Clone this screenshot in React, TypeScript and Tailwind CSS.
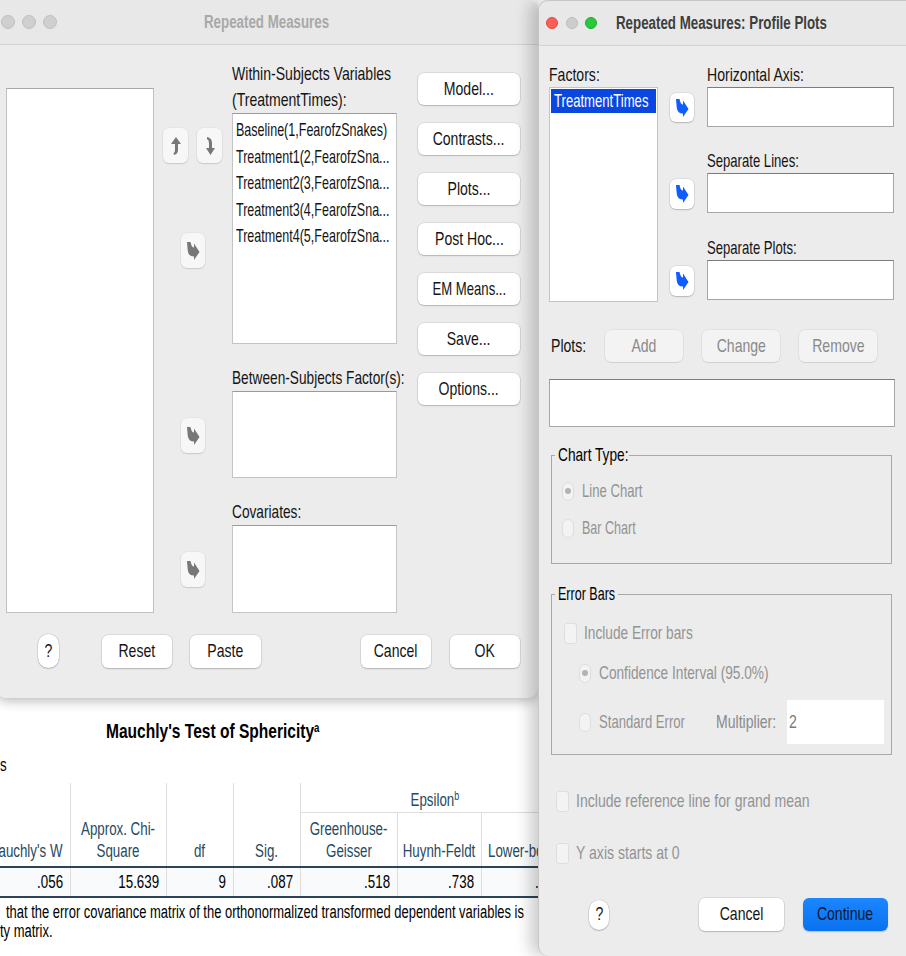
import React from "react";

const F = "font-['Liberation_Sans',Arial,sans-serif]";

function T({ children, o = "c", s = 74 }: { children: React.ReactNode; o?: "l" | "c" | "r"; s?: 74 | 72 | 69 | 66 }) {
  const origin = o === "l" ? "origin-left" : o === "r" ? "origin-right" : "origin-center";
  const sc = s === 72 ? "scale-x-[0.72]" : s === 69 ? "scale-x-[0.69]" : s === 66 ? "scale-x-[0.66]" : "scale-x-[0.74]";
  return <span className={`inline-block whitespace-nowrap ${sc} ${origin}`}>{children}</span>;
}

function RightArrow({ color = "#777777" }: { color?: string }) {
  return (
    <svg width="14" height="20" viewBox="0 0 14 20">
      <path d="M1 1 L4.5 1 Q5.5 6.5 8 6.5 L8 2.5 L13.5 11 L8 19 L8 15.5 Q2.5 15.5 1.8 10 Q1.4 6 1 1 Z" fill={color} />
    </svg>
  );
}

function UpArrow() {
  return (
    <svg width="12" height="20" viewBox="0 0 12 20">
      <path d="M6 1 L11 8 L8 8 L8 14 Q8 18 4 19 L3.5 17.5 Q5 16.5 5 14 L5 8 L1 8 Z" fill="#777777" />
    </svg>
  );
}

function DownArrow() {
  return (
    <svg width="12" height="20" viewBox="0 0 12 20">
      <path d="M3 1 Q8 2 8 7 L8 12 L11 12 L6.5 19 L2 12 L5 12 L5 7 Q5 4 3 3 Z" fill="#777777" />
    </svg>
  );
}

const btn =
  "bg-white rounded-[6px] shadow-[0_1px_1.5px_rgba(0,0,0,0.18),0_0_0_0.5px_rgba(0,0,0,0.14)] flex items-center justify-center text-[19px] text-[#141414]";
const disBtn =
  "bg-[#f3f3f3] rounded-[6px] shadow-[0_1px_1px_rgba(0,0,0,0.08),0_0_0_0.5px_rgba(0,0,0,0.08)] flex items-center justify-center text-[19px] text-[#8a8a8a]";
const arrowBtn =
  "bg-[#f7f7f7] rounded-[6px] shadow-[0_1px_1.5px_rgba(0,0,0,0.12),0_0_0_0.5px_rgba(0,0,0,0.06)] flex items-center justify-center";
const blueArrowBtn =
  "bg-white rounded-[6px] shadow-[0_1px_1.5px_rgba(0,0,0,0.18),0_0_0_0.5px_rgba(0,0,0,0.12)] flex items-center justify-center";
const box = "bg-white border border-[#c4c4c4] border-t-[#9a9a9a]";
const radio = "w-[12px] h-[19px] rounded-full bg-[#f3f3f3] border border-[#dedede] flex items-center justify-center shrink-0";
const check = "w-[13px] h-[21px] rounded-[3px] bg-[#f3f3f3] border border-[#dedede] shrink-0";

function LeftDialog() {
  return (
    <div className="-ml-[4px] w-[542px] h-[698px] shrink-0 bg-[#ececec] rounded-b-[10px] rounded-tr-[10px] shadow-[0_3px_12px_rgba(0,0,0,0.28)] relative z-[1] flex flex-col">
      <div className="h-[45px] shrink-0 grid grid-cols-[1fr_auto_1fr] items-center border-b border-[#d2d2d2] bg-[#e8e8e8] rounded-tr-[10px]">
        <div className="flex gap-[7px] pl-[5px]">
          <div className="w-[14px] h-[14px] rounded-full bg-[#cfcfcf] border border-[#c0c0c0]" />
          <div className="w-[14px] h-[14px] rounded-full bg-[#cfcfcf] border border-[#c0c0c0]" />
          <div className="w-[14px] h-[14px] rounded-full bg-[#cfcfcf] border border-[#c0c0c0]" />
        </div>
        <div className="text-[18px] font-bold text-[#a8a8a8]"><T>Repeated Measures</T></div>
        <div />
      </div>
      <div className="flex h-[568px] pl-[10px] text-[19px] text-[#141414]">
        <div className="pt-[43px] w-[148px] shrink-0">
          <div className="h-[525px] bg-white border border-[#c0c0c0] border-t-[#a8a8a8]" />
        </div>
        <div className="ml-[9px] w-[59px] shrink-0 flex flex-col items-center pt-[83px]">
          <div className="flex gap-[9px]">
            <div className={`${arrowBtn} w-[25px] h-[35px]`}><UpArrow /></div>
            <div className={`${arrowBtn} w-[25px] h-[35px]`}><DownArrow /></div>
          </div>
          <div className={`${arrowBtn} w-[24px] h-[35px] mt-[70px]`}><RightArrow /></div>
          <div className={`${arrowBtn} w-[24px] h-[35px] mt-[150px]`}><RightArrow /></div>
          <div className={`${arrowBtn} w-[24px] h-[35px] mt-[99px]`}><RightArrow /></div>
        </div>
        <div className="ml-[10px] w-[165px] shrink-0 pt-[16px] flex flex-col">
          <div className="leading-[26px]"><T o="l">Within-Subjects Variables</T></div>
          <div className="leading-[26px]"><T o="l">(TreatmentTimes):</T></div>
          <div className={`${box} h-[232px] pt-[3px] pl-[3px] leading-[26.5px] overflow-hidden`}>
            <div><T o="l" s={66}>Baseline(1,FearofzSnakes)</T></div>
            <div><T o="l" s={66}>Treatment1(2,FearofzSna...</T></div>
            <div><T o="l" s={66}>Treatment2(3,FearofzSna...</T></div>
            <div><T o="l" s={66}>Treatment3(4,FearofzSna...</T></div>
            <div><T o="l" s={66}>Treatment4(5,FearofzSna...</T></div>
          </div>
          <div className="leading-[26px] mt-[21px]"><T o="l" s={72}>Between-Subjects Factor(s):</T></div>
          <div className={`${box} h-[87px]`} />
          <div className="leading-[26px] mt-[21px]"><T o="l" s={72}>Covariates:</T></div>
          <div className={`${box} h-[88px]`} />
        </div>
        <div className="ml-[21px] w-[102px] shrink-0 pt-[28px] flex flex-col gap-[18px]">
          <div className={`${btn} h-[32px]`}><T>Model...</T></div>
          <div className={`${btn} h-[32px]`}><T>Contrasts...</T></div>
          <div className={`${btn} h-[32px]`}><T>Plots...</T></div>
          <div className={`${btn} h-[32px]`}><T>Post Hoc...</T></div>
          <div className={`${btn} h-[32px]`}><T s={69}>EM Means...</T></div>
          <div className={`${btn} h-[32px]`}><T>Save...</T></div>
          <div className={`${btn} h-[32px]`}><T>Options...</T></div>
        </div>
      </div>
      <div className="flex items-center h-[34px] mt-[21px] pl-[42px]">
        <div className={`${btn} w-[21px] h-[34px] !rounded-full`}><T>?</T></div>
        <div className={`${btn} w-[70px] h-[33px] ml-[43px]`}><T>Reset</T></div>
        <div className={`${btn} w-[71px] h-[33px] ml-[18px]`}><T>Paste</T></div>
        <div className={`${btn} w-[70px] h-[33px] ml-[100px]`}><T>Cancel</T></div>
        <div className={`${btn} w-[70px] h-[33px] ml-[19px]`}><T>OK</T></div>
      </div>
    </div>
  );
}

function Viewer() {
  const hd = "text-[18px] leading-[22px] text-[#264a60]";
  const cols = "grid grid-cols-[92px_96px_67px_67px_97px_84px_87px]";
  return (
    <div className="flex-1 bg-white">
      <div className="mt-[20px] pl-[106px] text-[21px] font-bold leading-[26px] text-black">
        <T o="l">Mauchly's Test of Sphericity<sup className="text-[13px] font-bold">a</sup></T>
      </div>
      <div className="mt-[11px] text-[18px] leading-[20px] text-black"><T o="l">s</T></div>
      <div className="mt-[8px] -ml-[22px] w-[590px]">
        <div className={`${cols} grid-rows-[30px_53px] ${hd} border-b-2 border-[#2b4457]`}>
          <div className="row-span-2 flex items-end justify-end pr-[8px] pb-[4px]"><T o="r">Mauchly's W</T></div>
          <div className="row-span-2 flex flex-col items-center justify-end pb-[4px] border-l border-[#dddddd]">
            <T>Approx. Chi-</T>
            <T>Square</T>
          </div>
          <div className="row-span-2 flex items-end justify-center pb-[4px] border-l border-[#dddddd]"><T>df</T></div>
          <div className="row-span-2 flex items-end justify-center pb-[4px] border-l border-[#dddddd]"><T>Sig.</T></div>
          <div className="col-span-3 flex items-center justify-center pt-[4px] border-l border-b border-[#dddddd]">
            <T>Epsilon<sup className="text-[12px]">b</sup></T>
          </div>
          <div className="flex flex-col items-center justify-end pb-[4px] border-l border-[#dddddd]">
            <T>Greenhouse-</T>
            <T>Geisser</T>
          </div>
          <div className="flex items-end justify-center pb-[4px] border-l border-[#dddddd]"><T>Huynh-Feldt</T></div>
          <div className="flex items-end justify-start pl-[6px] pb-[4px] border-l border-[#dddddd]"><T o="l">Lower-bound</T></div>
        </div>
        <div className={`${cols} h-[30px] text-[18px] text-black bg-[#f9fafb] border-b-2 border-[#2b4457]`}>
          {[".056", "15.639", "9", ".087", ".518", ".738", ".250"].map((v, i) => (
            <div key={i} className={`flex items-center justify-end pr-[7px] ${i > 0 ? "border-l border-[#dddddd]" : ""}`}><T o="r">{v}</T></div>
          ))}
        </div>
      </div>
      <div className="mt-[5px] text-[18px] leading-[19px] text-black">
        <div className="pl-[6px]"><T o="l" s={72}>that the error covariance matrix of the orthonormalized transformed dependent variables is</T></div>
        <div><T o="l" s={72}>ty matrix.</T></div>
      </div>
    </div>
  );
}

function RightDialog() {
  return (
    <div className="w-[368px] shrink-0 h-[956px] bg-[#ececec] rounded-tl-[10px] rounded-bl-[10px] border-l border-t border-[#c6c6c6] relative z-10 shadow-[-8px_0_16px_rgba(0,0,0,0.2)] flex flex-col text-[19px] text-[#141414]">
      <div className="h-[45px] shrink-0 flex items-center border-b border-[#d2d2d2] bg-[#e8e8e8] rounded-tl-[10px] pl-[7px]">
        <div className="w-[12px] h-[12px] rounded-full bg-[#fe5f57] border border-[#e14640]" />
        <div className="w-[12px] h-[12px] rounded-full bg-[#cdcdcd] border border-[#bdbdbd] ml-[8px]" />
        <div className="w-[12px] h-[12px] rounded-full bg-[#28c840] border border-[#1aab29] ml-[7px]" />
        <div className="ml-[19px] text-[18px] font-bold text-[#3e3e3e]"><T o="l">Repeated Measures: Profile Plots</T></div>
      </div>
      <div className="flex pl-[10px]">
        <div className="w-[109px] shrink-0 pt-[17px]">
          <div className="leading-[24px]"><T o="l">Factors:</T></div>
          <div className="h-[215px] bg-white border border-[#9fd0ea] p-[1px] overflow-hidden">
            <div className="h-[24px] bg-[#0a46e0] text-white leading-[24px] pl-[3px]"><T o="l" s={69}>TreatmentTimes</T></div>
          </div>
        </div>
        <div className="ml-[12px] w-[24px] shrink-0 pt-[47px] flex flex-col">
          <div className={`${blueArrowBtn} h-[29px]`}><RightArrow color="#0f5cff" /></div>
          <div className={`${blueArrowBtn} h-[30px] mt-[57px]`}><RightArrow color="#0f5cff" /></div>
          <div className={`${blueArrowBtn} h-[30px] mt-[57px]`}><RightArrow color="#0f5cff" /></div>
        </div>
        <div className="ml-[13px] w-[187px] shrink-0 pt-[17px] flex flex-col">
          <div className="leading-[24px]"><T o="l">Horizontal Axis:</T></div>
          <div className="h-[40px] bg-white border border-[#a6a6a6] border-t-[#7c7c7c]" />
          <div className="leading-[24px] mt-[22px]"><T o="l" s={69}>Separate Lines:</T></div>
          <div className="h-[40px] bg-white border border-[#a6a6a6] border-t-[#7c7c7c]" />
          <div className="leading-[24px] mt-[23px]"><T o="l" s={69}>Separate Plots:</T></div>
          <div className="h-[40px] bg-white border border-[#a6a6a6] border-t-[#7c7c7c]" />
        </div>
      </div>
      <div className="flex items-center h-[32px] mt-[28px] pl-[12px]">
        <div className="w-[54px] shrink-0"><T o="l">Plots:</T></div>
        <div className={`${disBtn} w-[78px] h-[32px]`}><T>Add</T></div>
        <div className={`${disBtn} w-[78px] h-[32px] ml-[19px]`}><T>Change</T></div>
        <div className={`${disBtn} w-[78px] h-[32px] ml-[19px]`}><T>Remove</T></div>
      </div>
      <div className="ml-[10px] w-[346px] h-[48px] mt-[17px] bg-white border border-[#a6a6a6] border-t-[#7c7c7c]" />
      <fieldset className="ml-[12px] w-[341px] h-[119px] mt-[18px] border border-[#a9a9a9] flex flex-col">
        <legend className="ml-[3px] w-[74px] pl-[3px] leading-[20px] text-black"><T o="l" s={72}>Chart Type:</T></legend>
        <div className="flex items-center h-[26px] mt-[13px] pl-[10px] text-[#939393]">
          <div className={radio}><div className="w-[6px] h-[6px] rounded-full bg-[#b3b3b3]" /></div>
          <span className="ml-[8px]"><T o="l" s={69}>Line Chart</T></span>
        </div>
        <div className="flex items-center h-[26px] mt-[11px] pl-[10px] text-[#939393]">
          <div className={radio} />
          <span className="ml-[8px]"><T o="l" s={66}>Bar Chart</T></span>
        </div>
      </fieldset>
      <fieldset className="ml-[12px] w-[341px] h-[171px] mt-[20px] border border-[#a9a9a9] flex flex-col">
        <legend className="ml-[3px] w-[63px] pl-[3px] leading-[20px] text-black"><T o="l" s={66}>Error Bars</T></legend>
        <div className="flex items-center h-[26px] mt-[16px] pl-[12px] text-[#939393]">
          <div className={check} />
          <span className="ml-[7px]"><T o="l" s={72}>Include Error bars</T></span>
        </div>
        <div className="flex items-center h-[26px] mt-[14px] pl-[27px] text-[#939393]">
          <div className={radio}><div className="w-[6px] h-[6px] rounded-full bg-[#b3b3b3]" /></div>
          <span className="ml-[8px]"><T o="l" s={72}>Confidence Interval (95.0%)</T></span>
        </div>
        <div className="flex items-center h-[44px] mt-[14px] pl-[27px] text-[#939393]">
          <div className={radio} />
          <span className="ml-[8px] w-[117px] shrink-0"><T o="l" s={69}>Standard Error</T></span>
          <span className="w-[71px] shrink-0 text-[#8a8a8a]"><T o="l">Multiplier:</T></span>
          <div className="w-[97px] h-[44px] shrink-0 bg-white flex items-center pl-[2px] text-[#7a7a7a]"><T o="l">2</T></div>
        </div>
      </fieldset>
      <div className="flex items-center h-[26px] mt-[33px] pl-[17px] text-[#939393]">
        <div className={check} />
        <span className="ml-[7px]"><T o="l">Include reference line for grand mean</T></span>
      </div>
      <div className="flex items-center h-[26px] mt-[26px] pl-[17px] text-[#939393]">
        <div className={check} />
        <span className="ml-[7px]"><T o="l">Y axis starts at 0</T></span>
      </div>
      <div className="flex items-center h-[33px] mt-[32px] pl-[50px]">
        <div className={`${btn} w-[20px] h-[30px] !rounded-full`}><T>?</T></div>
        <div className={`${btn} w-[85px] h-[33px] ml-[90px]`}><T>Cancel</T></div>
        <div className="w-[85px] h-[33px] ml-[19px] rounded-[6px] bg-gradient-to-b from-[#1a86ff] to-[#0a72f0] shadow-[0_1px_1.5px_rgba(0,0,0,0.2)] flex items-center justify-center text-[19px] text-[#0b1830]"><T>Continue</T></div>
      </div>
    </div>
  );
}

export default function App() {
  return (
    <div className={`w-[906px] h-[956px] overflow-hidden bg-white flex ${F}`}>
      <div className="w-[538px] shrink-0 flex flex-col overflow-hidden">
        <LeftDialog />
        <Viewer />
      </div>
      <RightDialog />
    </div>
  );
}
